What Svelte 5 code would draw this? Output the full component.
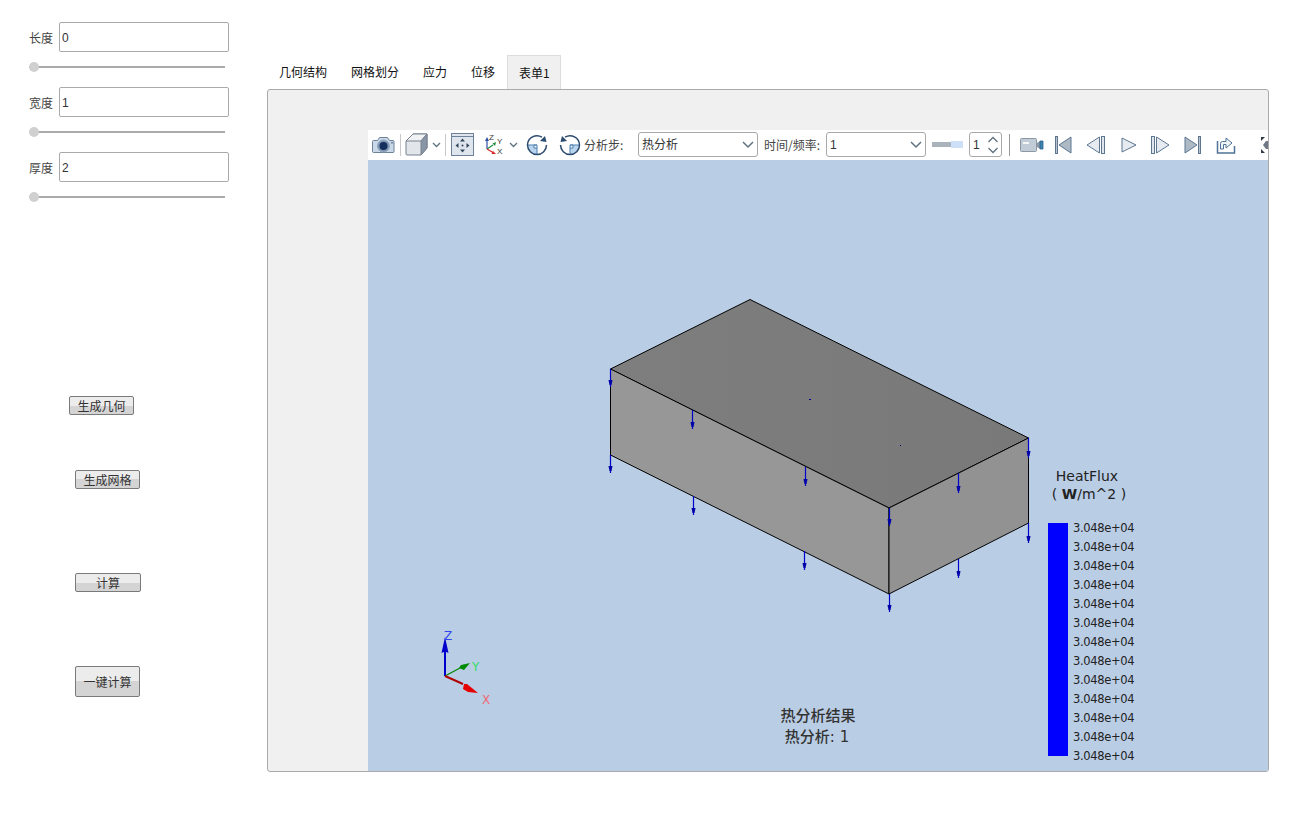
<script lang="ts">
    const fields = [
        { label: '长度', value: '0' },
        { label: '宽度', value: '1' },
        { label: '厚度', value: '2' }
    ];
    const tabs = ['几何结构', '网格划分', '应力', '位移', '表单1'];
    const legendRows = Array.from({ length: 13 }, (_, i) => 532 + i * 19);
    const arrows = [
        [610, 369, 387], [692, 410, 429], [805, 467, 486], [889, 508, 526], [958, 473, 493], [1028, 438, 458],
        [610, 455, 473], [693, 496, 515], [804, 551, 570], [889, 594, 612], [958, 559, 578], [1028, 523, 543]
    ];
</script>

<div class="page">
    <aside class="sidebar">
        {#each fields as field}
            <div class="field">
                <div class="field-row">
                    <span class="field-label">{field.label}</span>
                    <input class="field-input" type="text" value={field.value} />
                </div>
                <input class="slider" type="range" min="0" max="100" value="0" />
            </div>
        {/each}
        <button class="btn btn-geo">生成几何</button>
        <button class="btn btn-mesh">生成网格</button>
        <button class="btn btn-calc">计算</button>
        <button class="btn btn-all">一键计算</button>
    </aside>

    <main class="main">
        <div class="tabs">
            {#each tabs as tab, i}
                <div class="tab" class:active={i === tabs.length - 1}>{tab}</div>
            {/each}
        </div>
        <div class="panel">
            <div class="frame">
                <div class="toolbar">
                    <!-- camera -->
                    <svg class="ico i-camera" width="23" height="18" viewBox="0 0 23 18">
                        <path d="M1.500 4.500h4l2-3h8l2 3h3.500a1 1 0 0 1 1 1v10a1 1 0 0 1-1 1h-19.500a1 1 0 0 1-1-1v-10a1 1 0 0 1 1-1z" fill="#c9d8e8" stroke="#6d8199" />
                        <circle cx="11.500" cy="10" r="6" fill="#7f97b3" stroke="#8fa5bd" />
                        <circle cx="11.500" cy="10" r="4" fill="#16305e" />
                        <rect x="19" y="6" width="2" height="1.500" fill="#6d8199" />
                    </svg>
                    <span class="sep s1"></span>
                    <!-- view cube -->
                    <svg class="ico i-cube" width="23" height="23" viewBox="0 0 23 23">
                        <path d="M1 8 8 1h14v14l-6 7H2a1 1 0 0 1-1-1z" fill="#e2e5e9" stroke="#76818f" />
                        <path d="M1 8h15l6-7H8z" fill="#f0f2f4" stroke="#76818f" />
                        <path d="M16 8l6-7v14l-6 7z" fill="#8a96a6" stroke="#76818f" />
                    </svg>
                    <svg class="chev c1" width="9" height="6" viewBox="0 0 9 6"><path d="M1 1l3.500 3.500L8 1" fill="none" stroke="#5f7280" stroke-width="1.300" /></svg>
                    <span class="sep s2"></span>
                    <!-- fit view -->
                    <svg class="ico i-fit" width="23" height="23" viewBox="0 0 23 23">
                        <rect x="0.500" y="0.500" width="22" height="22" fill="#dfe5ec" stroke="#6d8199" />
                        <path d="M1 3.500h21" stroke="#6d8199" />
                        <path d="M11.500 5.500l2.500 3h-5zM11.500 19.500l2.500-3h-5zM4.500 12.500l3-2.500v5zM18.500 12.500l-3-2.500v5z" fill="#33465c" />
                        <circle cx="11.500" cy="12.500" r="1" fill="#33465c" />
                    </svg>
                    <!-- axes -->
                    <svg class="ico i-axes" width="22" height="23" viewBox="0 0 22 23">
                        <path d="M4 16V7" stroke="#2a4fa8" stroke-width="1.200" />
                        <path d="M4 4l2 4H2z" fill="#2a4fa8" />
                        <path d="M4 16l6-4" stroke="#1c8a3c" stroke-width="1.200" />
                        <path d="M13 9l-1 4-2.500-2.500z" fill="#1c8a3c" />
                        <path d="M4 16l6 3.500" stroke="#d8262c" stroke-width="1.200" />
                        <path d="M13 21l-4.500 0 1.500-3z" fill="#d8262c" />
                        <text x="6" y="7" class="axis-tag">Z</text>
                        <text x="14" y="11" class="axis-tag">Y</text>
                        <text x="14" y="21" class="axis-tag">X</text>
                    </svg>
                    <svg class="chev c2" width="9" height="6" viewBox="0 0 9 6"><path d="M1 1l3.500 3.500L8 1" fill="none" stroke="#5f7280" stroke-width="1.300" /></svg>
                    <!-- rotate cw -->
                    <svg class="ico i-cw" width="22" height="22" viewBox="0 0 22 22">
                        <path d="M2 11h9v9.500A9.500 9.500 0 0 1 2 11z" fill="#b9d4ee" />
                        <path d="M11 11h-3v3h3" fill="#fff" stroke="#4d7fb0" />
                        <path d="M11 11v9.500M2 11h9" stroke="#4d7fb0" />
                        <path d="M16 3.200A9.500 9.500 0 0 0 1.500 11a9.500 9.500 0 0 0 19 0" fill="none" stroke="#2b4a6f" stroke-width="1.500" />
                        <path d="M20.500 8 14 7l5-5z" fill="#2b4a6f" />
                    </svg>
                    <!-- rotate ccw -->
                    <svg class="ico i-ccw" width="22" height="22" viewBox="0 0 22 22">
                        <path d="M20 11h-9v9.500A9.500 9.500 0 0 0 20 11z" fill="#b9d4ee" />
                        <path d="M11 11h3v3h-3" fill="#fff" stroke="#4d7fb0" />
                        <path d="M11 11v9.500M20 11h-9" stroke="#4d7fb0" />
                        <path d="M6 3.200A9.500 9.500 0 0 1 20.500 11a9.500 9.500 0 0 1-19 0" fill="none" stroke="#2b4a6f" stroke-width="1.500" />
                        <path d="M1.500 8 8 7 3 2z" fill="#2b4a6f" />
                    </svg>
                    <span class="tool-label l1">分析步:</span>
                    <div class="select-wrap w1">
                        <select class="select"><option>热分析</option></select>
                        <svg class="select-chev" width="12" height="8" viewBox="0 0 12 8"><path d="M1 1l5 5 5-5" fill="none" stroke="#5f7280" stroke-width="1.500" /></svg>
                    </div>
                    <span class="tool-label l2">时间/频率:</span>
                    <div class="select-wrap w2">
                        <select class="select"><option>1</option></select>
                        <svg class="select-chev" width="12" height="8" viewBox="0 0 12 8"><path d="M1 1l5 5 5-5" fill="none" stroke="#5f7280" stroke-width="1.500" /></svg>
                    </div>
                    <div class="speed"><span class="speed-a"></span><span class="speed-b"></span></div>
                    <div class="spin">
                        <span>1</span>
                        <svg width="12" height="20" viewBox="0 0 12 20">
                            <path d="M1.500 7 6 2.500 10.500 7M1.500 13 6 17.500 10.500 13" fill="none" stroke="#5f7280" stroke-width="1.300" />
                        </svg>
                    </div>
                    <span class="sep s3"></span>
                    <!-- video -->
                    <svg class="ico i-video" width="24" height="14" viewBox="0 0 24 14">
                        <rect x="0.500" y="0.500" width="16" height="13" rx="1" fill="#c2ccd6" stroke="#8a98a6" />
                        <rect x="3" y="4" width="6" height="2" fill="#f4f6f8" />
                        <path d="M17 5l3-2v8l-3-2z" fill="#8a98a6" />
                        <path d="M20 3h3v8h-3z" fill="#3f83b5" stroke="#2b5f88" stroke-width="0.800" />
                    </svg>
                    <svg class="ico i-first" width="17" height="18" viewBox="0 0 17 18">
                        <rect x="0.500" y="0.500" width="2" height="17" fill="#b8c4d2" stroke="#5c7690" />
                        <path d="M16 1v16L4 9z" fill="#aeb9c6" stroke="#5c7690" />
                    </svg>
                    <svg class="ico i-prev" width="19" height="18" viewBox="0 0 19 18">
                        <path d="M13.500 1v16L1 9z" fill="#e6ebf1" stroke="#5c7690" />
                        <rect x="15.500" y="0.500" width="3" height="17" fill="#dfe5ec" stroke="#5c7690" />
                    </svg>
                    <svg class="ico i-play" width="16" height="16" viewBox="0 0 16 16">
                        <path d="M1 1v14l14-7z" fill="#e6ebf1" stroke="#5c7690" />
                    </svg>
                    <svg class="ico i-next" width="19" height="18" viewBox="0 0 19 18">
                        <rect x="0.500" y="0.500" width="3" height="17" fill="#dfe5ec" stroke="#5c7690" />
                        <path d="M5.500 1v16L18 9z" fill="#e6ebf1" stroke="#5c7690" />
                    </svg>
                    <svg class="ico i-last" width="17" height="18" viewBox="0 0 17 18">
                        <path d="M1 1v16L13 9z" fill="#aeb9c6" stroke="#5c7690" />
                        <rect x="14.500" y="0.500" width="2" height="17" fill="#b8c4d2" stroke="#5c7690" />
                    </svg>
                    <svg class="ico i-export" width="20" height="18" viewBox="0 0 20 18">
                        <path d="M1.500 5v12h17v-7" fill="none" stroke="#4f7396" stroke-width="1.500" />
                        <path d="M4.500 13V7.500a2 2 0 0 1 2-2H10V2l6 5-6 5V8.500H7.500V13z" fill="#eef3f8" stroke="#4f7396" />
                    </svg>
                    <svg class="ico i-full" width="10" height="16" viewBox="0 0 10 16">
                        <path d="M0 0h4L0 4zM0 16h4L0 12z" fill="#2f3a46" />
                        <path d="M5 4h5v8H5L2 8z" fill="#6d7884" />
                    </svg>
                </div>

                <svg class="viewport" viewBox="368 160 900 611" width="900" height="611">
                    <defs>
                        <linearGradient id="topFace" x1="0" y1="0" x2="1" y2="0">
                            <stop offset="0" stop-color="#7e7e7e" />
                            <stop offset="1" stop-color="#797979" />
                        </linearGradient>
                    </defs>
                    <g stroke="#000" stroke-width="1" stroke-linejoin="round">
                        <polygon points="610.500,369 750,299.500 1028.500,438 889,508" fill="url(#topFace)" />
                        <polygon points="610.500,369 889,508 889,594 610.500,455" fill="#979797" />
                        <polygon points="889,508 1028.500,438 1028.500,523 889,594" fill="#929292" />
                    </g>
                    <rect x="809" y="399" width="2" height="1" fill="#00008b" />
                    <rect x="900" y="445" width="1" height="1" fill="#00008b" />
                    {#each arrows as [x, y1, y2]}
                        <path d="M{x + 0.500} {y1}V{y2}" stroke="#0000cc" stroke-width="1.200" />
                        <path d="M{x - 1.500} {y2 - 7}h4l-1 5h-2z" fill="#0000a8" />
                    {/each}

                    <!-- axis triad -->
                    <path d="M445 676V650" stroke="#0000cc" stroke-width="2" />
                    <path d="M445 637l3.500 16 -3.500 -1.500 -3.500 1.500z" fill="#0000cc" />
                    <path d="M445 676l15 -8" stroke="#008a00" stroke-width="1.200" />
                    <path d="M470 663l-6 7 -5 -2 2 -3z" fill="#008a00" />
                    <path d="M445 676l18 8" stroke="#b00000" stroke-width="2" />
                    <path d="M478 693l-10 -1 -5 -3 1 -5 3 0z" fill="#e60000" />
                    <text x="444" y="640" class="axis-letter" fill="#3344ee">Z</text>
                    <text x="472" y="671" class="axis-letter" fill="#33dd66">Y</text>
                    <text x="482" y="704" class="axis-letter" fill="#f06a74">X</text>

                    <!-- legend -->
                    <text x="1087" y="481" class="legend-title">HeatFlux</text>
                    <text x="1089" y="499" class="legend-title">( <tspan class="legend-unit">W</tspan>/m^2 )</text>
                    <rect x="1048" y="523" width="20" height="233" fill="#0000ff" />
                    {#each legendRows as y}
                        <text x="1073" {y} class="legend-value">3.048e+04</text>
                    {/each}

                    <text x="818" y="721" class="caption">热分析结果</text>
                    <text x="817" y="742" class="caption">热分析: 1</text>
                </svg>
            </div>
        </div>
    </main>
</div>

<style>
    :global(body) {
        margin: 0;
        background: #fff;
    }

    .page {
        display: flex;
        width: 1291px;
        height: 832px;
        overflow: hidden;
        font-family: "Liberation Sans", "Noto Sans CJK SC", sans-serif;
        font-size: 12px;
        color: #333;
    }

    .sidebar {
        width: 267px;
        flex-shrink: 0;
        box-sizing: border-box;
        padding: 22px 0 0 29px;
        display: flex;
        flex-direction: column;
        align-items: flex-start;
    }

    .field {
        height: 65px;
    }

    .field:last-of-type {
        height: 50px;
    }

    .field-row {
        display: flex;
        align-items: center;
        gap: 6px;
    }

    .field-label {
        width: 24px;
        font-family: "Noto Sans CJK SC", sans-serif;
        color: #444;
    }

    .field-input {
        width: 170px;
        height: 30px;
        box-sizing: border-box;
        padding: 1px 2px 0;
        border: 1px solid #a9a9a9;
        border-radius: 2px;
        font: 12px "Liberation Sans", sans-serif;
        color: #333;
        outline: none;
    }

    .slider {
        appearance: none;
        -webkit-appearance: none;
        display: block;
        width: 196px;
        height: 10px;
        margin: 10px 0 0;
        background: transparent;
    }

    .slider::-webkit-slider-runnable-track {
        height: 2px;
        background: #aaa;
    }

    .slider::-webkit-slider-thumb {
        -webkit-appearance: none;
        width: 10px;
        height: 10px;
        margin-top: -4px;
        border-radius: 50%;
        background: #d0d0d0;
    }

    .btn {
        padding: 0;
        box-sizing: border-box;
        border: 1px solid #7a7a7a;
        border-radius: 2px;
        background: linear-gradient(#ececec 0 50%, #d4d4d4 50% 100%);
        font-family: "Noto Sans CJK SC", sans-serif;
        font-size: 12px;
        color: #333;
    }

    .btn-geo {
        width: 65px;
        height: 19px;
        margin: 194px 0 0 40px;
    }

    .btn-mesh {
        width: 65px;
        height: 19px;
        margin: 55px 0 0 46px;
    }

    .btn-calc {
        width: 66px;
        height: 19px;
        margin: 84px 0 0 46px;
    }

    .btn-all {
        width: 65px;
        height: 31px;
        margin: 74px 0 0 46px;
    }

    .main {
        width: 1002px;
        padding-top: 55px;
    }

    .tabs {
        display: flex;
        height: 34px;
    }

    .tab {
        padding: 0 12px;
        line-height: 34px;
        font-family: "Noto Sans CJK SC", sans-serif;
        color: #111;
    }

    .tab.active {
        width: 54px;
        box-sizing: border-box;
        padding: 0 0 0 11px;
        border: 1px solid #ddd;
        border-bottom: none;
        background: #f0f0f0;
        line-height: 33px;
    }

    .panel {
        box-sizing: border-box;
        height: 683px;
        padding: 40px 0 0 100px;
        border: 1px solid #aaa;
        border-radius: 3px;
        background: #f0f0f0;
    }

    .frame {
        height: 641px;
        overflow: hidden;
    }

    .toolbar {
        position: relative;
        display: flex;
        align-items: center;
        box-sizing: border-box;
        width: 900px;
        height: 30px;
        padding-bottom: 1px;
        background: #fff;
        overflow: hidden;
    }

    .ico,
    .chev,
    .sep,
    .select-wrap,
    .tool-label,
    .speed,
    .spin {
        flex-shrink: 0;
    }

    .i-camera { margin-left: 4px; }
    .s1 { margin-left: 5px; }
    .i-cube { margin-left: 4px; }
    .c1 { margin-left: 4px; }
    .s2 { margin-left: 4px; }
    .i-fit { margin-left: 5px; }
    .i-axes { margin-left: 9px; }
    .c2 { margin-left: 4px; }
    .i-cw { margin-left: 8px; }
    .i-ccw { margin-left: 11px; }
    .l1 { margin-left: 3px; width: 54px; }
    .l2 { margin-left: 6px; width: 62px; }
    .w1 { width: 120px; }
    .w2 { width: 100px; }
    .s3 { margin-left: 7px; height: 28px; }
    .i-video { margin-left: 10px; }
    .i-first { margin-left: 11px; }
    .i-prev { margin-left: 14px; }
    .i-play { margin-left: 16px; }
    .i-next { margin-left: 14px; }
    .i-last { margin-left: 14px; }
    .i-export { margin-left: 15px; }
    .i-full { margin-left: 25px; }

    .sep {
        width: 1px;
        height: 22px;
        background: #c8c8c8;
    }

    .s3 {
        background: #9a9a9a;
    }

    .axis-tag {
        font: 8px "Liberation Sans", sans-serif;
        fill: #333;
    }

    .tool-label {
        font-family: "Noto Sans CJK SC", sans-serif;
        color: #444;
        white-space: nowrap;
    }

    .select-wrap {
        position: relative;
        height: 25px;
    }

    .select {
        appearance: none;
        -webkit-appearance: none;
        width: 100%;
        height: 100%;
        padding: 0 3px;
        box-sizing: border-box;
        border: 1px solid #a9a9a9;
        border-radius: 3px;
        background: #fff;
        font-family: "Liberation Sans", "Noto Sans CJK SC", sans-serif;
        font-size: 12px;
        color: #333;
    }

    .select-chev {
        position: absolute;
        right: 4px;
        top: 9px;
        pointer-events: none;
    }

    .speed {
        display: flex;
        margin-left: 6px;
    }

    .speed-a {
        width: 19px;
        height: 5px;
        margin-top: 1px;
        background: #aab2bb;
    }

    .speed-b {
        width: 12px;
        height: 7px;
        background: #cde0f7;
    }

    .spin {
        display: flex;
        align-items: center;
        justify-content: space-between;
        box-sizing: border-box;
        width: 33px;
        height: 25px;
        margin-left: 6px;
        padding: 0 2px 0 3px;
        border: 1px solid #a9a9a9;
        border-radius: 3px;
        color: #333;
    }

    .viewport {
        display: block;
        background: #b9cde5;
    }

    .axis-letter {
        font: 12px "DejaVu Sans", sans-serif;
    }

    .legend-title {
        font: 14px "DejaVu Sans", sans-serif;
        fill: #222;
        text-anchor: middle;
    }

    .legend-unit {
        font-weight: 700;
    }

    .legend-value {
        font: 11.500px "DejaVu Sans", sans-serif;
        letter-spacing: -0.350px;
        fill: #222;
    }

    .caption {
        font: 500 15px "DejaVu Sans", "Noto Sans CJK SC", sans-serif;
        fill: #333;
        text-anchor: middle;
    }
</style>
